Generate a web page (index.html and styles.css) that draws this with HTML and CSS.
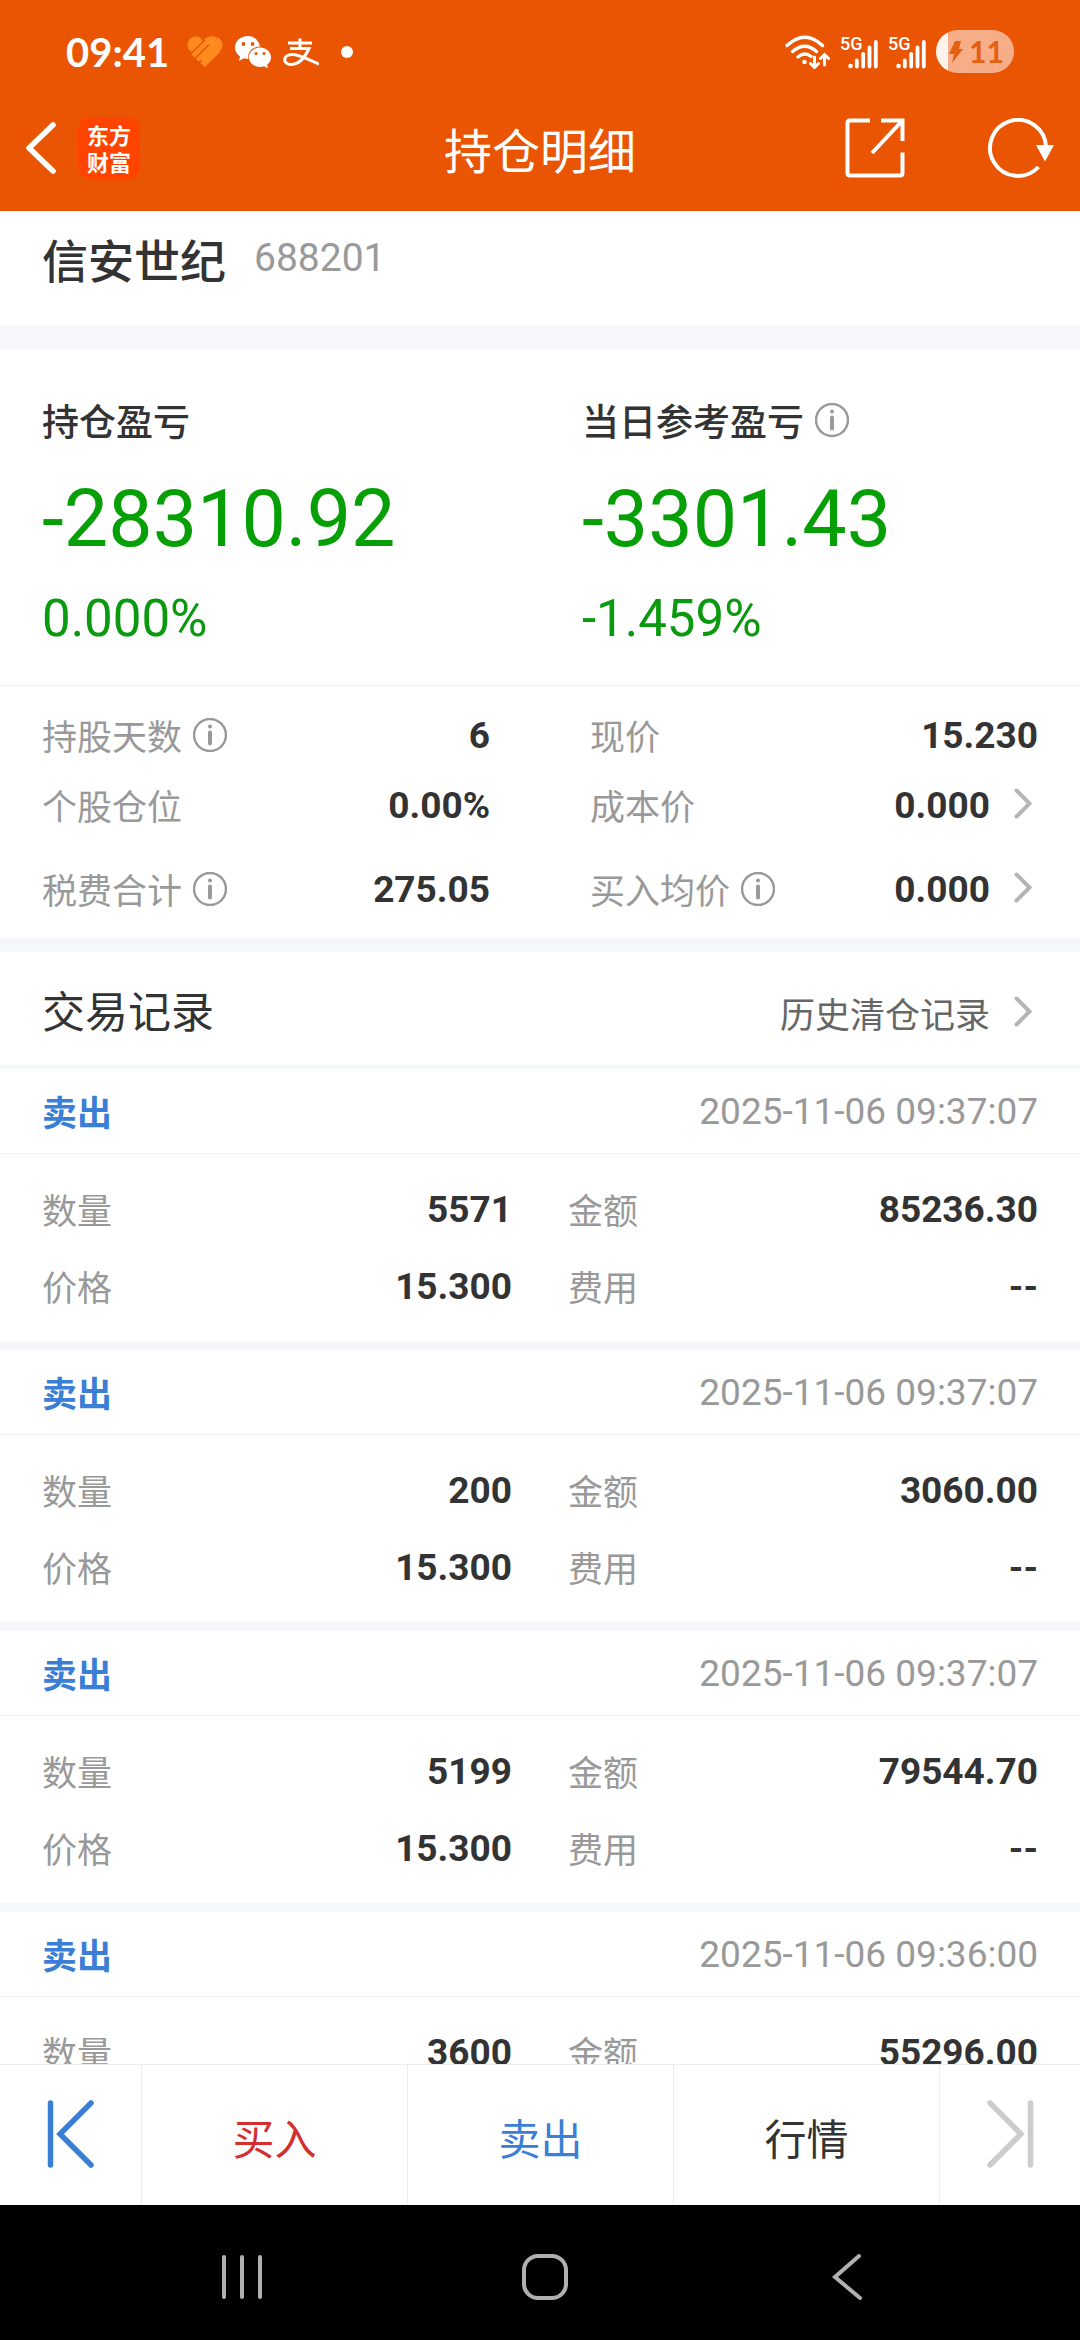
FILE: index.html
```html
<!DOCTYPE html>
<html lang="zh-CN">
<head>
    <meta charset="UTF-8">
    <meta name="viewport" content="width=device-width, initial-scale=1.0">
    <title>持仓明细</title>
    <link rel="stylesheet" href="styles.css">
</head>
<body>
    <!-- shared icons -->
    <svg class="icon-defs" aria-hidden="true">
        <symbol id="info" viewBox="0 0 34 34">
            <circle cx="17" cy="17" r="16" fill="none" stroke="currentColor" stroke-width="2.500"/>
            <circle cx="17" cy="8.500" r="2" fill="currentColor"/>
            <path d="M17 14.500v11" stroke="currentColor" stroke-width="4" stroke-linecap="round"/>
        </symbol>
        <symbol id="arrow" viewBox="0 0 24 34">
            <path d="M2.500 2.500L15.500 15.500L2.500 28.500" fill="none" stroke="currentColor" stroke-width="4" stroke-linecap="round"/>
        </symbol>
        <symbol id="signal" viewBox="0 0 30 30">
            <circle cx="2.500" cy="27" r="2.300" fill="currentColor"/>
            <path d="M8.800 21.500v6M15.200 15v12.500M21.500 8.500v19M27.800 3v24.500" stroke="currentColor" stroke-width="3.800" stroke-linecap="round"/>
        </symbol>
    </svg>

    <header class="top">
        <div class="status-bar">
            <span class="clock">09:41</span>
            <svg class="app-icon" viewBox="0 0 36 32">
                <g fill="none" stroke="#ff8a1e">
                    <path stroke-width="7" d="M3 14.500L14 3.500"/>
                    <path stroke-width="6" d="M5.500 19.500L18.500 6.500C22 3 26 3 29 4M9.500 23.500L24 9c2.500-2 4.500 0 2.500 2.500L14 24"/>
                    <path stroke-width="6.500" d="M15.500 29L29.500 15C33 11 33.500 6.500 29 4"/>
                </g>
                <circle cx="8.500" cy="8.500" r="8" fill="#ff8a1e"/>
                <path stroke="#e95503" stroke-width="1.500" d="M3 18.500L18 4M8 22.500L22 8.500"/>
            </svg>
            <svg class="app-icon" viewBox="0 0 36 32">
                <path fill="#fff" d="M13 0C5.500 0 0 5 0 11.500c0 4 2 7 5 9L4 25l5-2.800c1.500.5 3 .6 4.500.6C12 16 18 10.500 25 10.500 24 4.500 19 0 13 0z"/>
                <path fill="#fff" d="M25 11.500c-6 0-11 4.300-11 9.700s5 9.700 11 9.700c1.500 0 2.800-.2 4-.7l4 2-1-3.500c2.500-1.800 4-4.500 4-7.500 0-5.400-5-9.700-11-9.700z"/>
                <g fill="#e95503"><circle cx="8.500" cy="8" r="1.900"/><circle cx="17.500" cy="8" r="1.900"/><circle cx="21" cy="17.500" r="1.500"/><circle cx="29" cy="17.500" r="1.500"/></g>
            </svg>
            <svg class="app-icon" viewBox="0 0 36 32">
                <path fill="none" stroke="#fff" stroke-width="3" d="M5 7h24M17 2.500v10.500M7 12.500h19C23 19 17 28.500 8 28.500c-9 0-8-10 1-10 8 0 16 5 27 9.500"/>
            </svg>
            <span class="more-dot"></span>
            <div class="status-right">
                <svg class="wifi" viewBox="0 0 46 34">
                    <g fill="none" stroke="#fff" stroke-width="3.400" stroke-linecap="round">
                        <path d="M2 10.500Q20 -6 37.500 10.500M7.500 16.500Q20 6 31.500 16.500M13 22Q20 16.500 26 21.500"/>
                        <path stroke-width="3" d="M29.500 22v10M25.500 28.500l4 4 4-4M39.500 30V20M35.500 23.500l4-4 4 4"/>
                    </g>
                    <circle cx="19.500" cy="27" r="2.300" fill="#fff"/>
                </svg>
                <span class="net"><b>5G</b><svg><use href="#signal"/></svg></span>
                <span class="net"><b>5G</b><svg><use href="#signal"/></svg></span>
                <span class="battery">
                    <svg viewBox="0 0 14 22"><path d="M6 0h6L10 8h4L3 22l2-9H0z"/></svg>
                    11
                </span>
            </div>
        </div>
        <div class="title-bar">
            <div class="title-left">
                <button class="icon-btn" aria-label="返回">
                    <svg class="back" viewBox="0 0 32 52"><path d="M28 3L4 26l24 23" fill="none" stroke="#fff" stroke-width="5.500" stroke-linecap="round" stroke-linejoin="round"/></svg>
                </button>
                <span class="brand">东方<br>财富</span>
            </div>
            <h1>持仓明细</h1>
            <div class="title-right">
                <button class="icon-btn" aria-label="分享">
                    <svg class="share" viewBox="0 0 60 60"><path d="M25 2.500H5Q2.500 2.500 2.500 5V55Q2.500 57.500 5 57.500H55Q57.500 57.500 57.500 55V34.500M36 2.500H57.500V23M57 3L27 35" fill="none" stroke="#fff" stroke-width="4"/></svg>
                </button>
                <button class="icon-btn" aria-label="刷新">
                    <svg class="refresh" viewBox="0 0 68 60"><path d="M51.500 49A28 28 0 1 1 59 29" fill="none" stroke="#fff" stroke-width="4"/><path d="M49 27H67L58 43.500z" fill="#fff"/></svg>
                </button>
            </div>
        </div>
    </header>

    <main>
        <section class="stock">
            <h2>信安世纪</h2>
            <span class="code">688201</span>
        </section>

        <section class="profit">
            <div>
                <h3>持仓盈亏</h3>
                <p class="amount">-28310.92</p>
                <p class="percent">0.000%</p>
            </div>
            <div>
                <h3>当日参考盈亏 <svg class="info"><use href="#info"/></svg></h3>
                <p class="amount">-3301.43</p>
                <p class="percent">-1.459%</p>
            </div>
        </section>

        <section class="stats">
            <div class="field"><span class="label">持股天数 <svg class="info"><use href="#info"/></svg></span><span class="value">6</span></div>
            <div class="field"><span class="label">现价</span><span class="value">15.230</span></div>
            <div class="field"><span class="label">个股仓位</span><span class="value">0.00%</span></div>
            <a class="field" href="#"><span class="label">成本价</span><span class="value">0.000</span><svg class="arrow"><use href="#arrow"/></svg></a>
            <div class="field last"><span class="label">税费合计 <svg class="info"><use href="#info"/></svg></span><span class="value">275.05</span></div>
            <a class="field last" href="#"><span class="label">买入均价 <svg class="info"><use href="#info"/></svg></span><span class="value">0.000</span><svg class="arrow"><use href="#arrow"/></svg></a>
        </section>

        <section class="records">
            <div class="records-title">
                <h2>交易记录</h2>
                <a href="#">历史清仓记录<svg class="arrow"><use href="#arrow"/></svg></a>
            </div>

            <article class="record">
                <div class="record-head"><b>卖出</b><time>2025-11-06 09:37:07</time></div>
                <div class="record-body">
                    <div class="field"><span class="label">数量</span><span class="value">5571</span></div>
                    <div class="field"><span class="label">金额</span><span class="value">85236.30</span></div>
                    <div class="field"><span class="label">价格</span><span class="value">15.300</span></div>
                    <div class="field"><span class="label">费用</span><span class="value">--</span></div>
                </div>
            </article>

            <article class="record">
                <div class="record-head"><b>卖出</b><time>2025-11-06 09:37:07</time></div>
                <div class="record-body">
                    <div class="field"><span class="label">数量</span><span class="value">200</span></div>
                    <div class="field"><span class="label">金额</span><span class="value">3060.00</span></div>
                    <div class="field"><span class="label">价格</span><span class="value">15.300</span></div>
                    <div class="field"><span class="label">费用</span><span class="value">--</span></div>
                </div>
            </article>

            <article class="record">
                <div class="record-head"><b>卖出</b><time>2025-11-06 09:37:07</time></div>
                <div class="record-body">
                    <div class="field"><span class="label">数量</span><span class="value">5199</span></div>
                    <div class="field"><span class="label">金额</span><span class="value">79544.70</span></div>
                    <div class="field"><span class="label">价格</span><span class="value">15.300</span></div>
                    <div class="field"><span class="label">费用</span><span class="value">--</span></div>
                </div>
            </article>

            <article class="record">
                <div class="record-head"><b>卖出</b><time>2025-11-06 09:36:00</time></div>
                <div class="record-body">
                    <div class="field"><span class="label">数量</span><span class="value">3600</span></div>
                    <div class="field"><span class="label">金额</span><span class="value">55296.00</span></div>
                </div>
            </article>
        </section>
    </main>

    <footer class="actions">
        <button class="prev" aria-label="上一只">
            <svg viewBox="0 0 48 68"><path d="M3.500 3v62M44 3L13 34l31 31" fill="none" stroke="currentColor" stroke-width="5.500" stroke-linecap="round"/></svg>
        </button>
        <button class="buy">买入</button>
        <button class="sell">卖出</button>
        <button class="quote">行情</button>
        <button class="next" aria-label="下一只">
            <svg viewBox="0 0 48 68"><path d="M44.500 3v62M4 3l31 31L4 65" fill="none" stroke="currentColor" stroke-width="5.500" stroke-linecap="round"/></svg>
        </button>
    </footer>

    <nav class="system-nav">
        <button aria-label="最近任务"><svg viewBox="0 0 48 48"><path d="M6 4v40M24 4v40M42 4v40"/></svg></button>
        <button aria-label="主屏幕"><svg viewBox="0 0 48 48"><rect x="3" y="3" width="42" height="42" rx="14"/></svg></button>
        <button aria-label="返回上级"><svg viewBox="0 0 48 48"><path d="M36 3L12 24l25 21"/></svg></button>
    </nav>
</body>
</html>
```

FILE: styles.css
```css
* {
    box-sizing: border-box;
}
body {
    margin: 0;
    height: 100vh;
    display: flex;
    flex-direction: column;
    background: #fff;
    color: #333;
    font-family: Roboto, 'Noto Sans CJK SC', sans-serif;
    font-size: 37px;
}
h1, h2, h3, p {
    margin: 0;
}
a {
    color: inherit;
    text-decoration: none;
}
button {
    border: none;
    padding: 0;
    background: none;
    color: inherit;
    font: inherit;
    cursor: pointer;
}
svg {
    display: block;
    flex: none;
}
.icon-defs {
    display: none;
}

/* header */
.top {
    flex: none;
    background: #e95503;
    color: #fff;
}
.status-bar {
    display: flex;
    align-items: center;
    gap: 12px;
    height: 85px;
    padding: 18px 66px 0;
}
.clock {
    font: bold 40px/48px Lato, sans-serif;
    margin-right: 6px;
}
.app-icon {
    width: 36px;
    height: 32px;
}
.more-dot {
    width: 12px;
    height: 12px;
    margin-left: 10px;
    border-radius: 50%;
    background: #fff;
}
.status-right {
    display: flex;
    align-items: center;
    gap: 9px;
    margin-left: auto;
}
.wifi {
    width: 46px;
    height: 34px;
}
.net {
    display: flex;
    align-items: flex-end;
    width: 39px;
    height: 34px;
}
.net b {
    width: 8px;
    align-self: flex-start;
    font-size: 18px;
    line-height: 18px;
    font-weight: 500;
}
.net svg {
    width: 30px;
    height: 30px;
}
.battery {
    display: flex;
    align-items: center;
    gap: 6px;
    width: 78px;
    height: 43px;
    padding-left: 13px;
    border-radius: 22px;
    background: linear-gradient(to right, #fff3ec 12px, #f6ad88 12px);
    color: #e2600f;
    font: bold 30px/43px Lato, sans-serif;
}
.battery svg {
    width: 14px;
    height: 22px;
    fill: #e2600f;
}
.title-bar {
    display: flex;
    align-items: center;
    height: 126px;
    padding: 0 25px;
}
.title-left, .title-right {
    flex: 1;
    display: flex;
    align-items: center;
}
.title-left {
    gap: 21px;
}
.title-right {
    justify-content: flex-end;
    gap: 82px;
}
.title-bar h1 {
    font-family: 'Noto Sans CJK SC', sans-serif;
    font-size: 48px;
    font-weight: 400;
    line-height: 60px;
}
.back {
    width: 32px;
    height: 52px;
}
.brand {
    padding: 4px 9px;
    border-radius: 12px;
    background: #ff4400;
    font: bold 22px/27px 'Noto Sans CJK SC', sans-serif;
}
.share {
    width: 60px;
    height: 60px;
}
.refresh {
    width: 68px;
    height: 60px;
}

/* content */
main {
    flex: 1;
    min-height: 0;
    overflow: hidden;
}
.stock {
    display: flex;
    align-items: center;
    gap: 28px;
    padding: 20px 42px 41px;
    border-bottom: 23px solid #f6f7fa;
}
.stock h2 {
    font: 500 46px/54px 'Noto Sans CJK SC', sans-serif;
}
.code {
    color: #999;
    font-size: 39px;
}
.profit {
    display: grid;
    grid-template-columns: 1fr 1fr;
    padding: 45px 0 36px;
    border-bottom: 1px solid #f2f3f5;
}
.profit > div {
    padding-left: 42px;
}
.profit h3 {
    display: flex;
    align-items: center;
    gap: 11px;
    font: 500 37px/52px 'Noto Sans CJK SC', sans-serif;
}
.info {
    width: 34px;
    height: 34px;
    color: #999;
}
.amount {
    margin-top: 27px;
    color: #069f06;
    font-size: 79px;
    line-height: 92px;
}
.percent {
    margin-top: 24px;
    color: #0a990f;
    font-size: 51px;
    line-height: 60px;
}
.stats {
    display: grid;
    grid-template-columns: 1fr 1fr;
    gap: 20px 100px;
    padding: 24px 42px;
    border-bottom: 14px solid #f6f7fa;
}
.field {
    display: flex;
    align-items: center;
    height: 50px;
}
.field.last {
    margin-top: 14px;
}
.label {
    display: flex;
    align-items: center;
    gap: 11px;
    color: #999;
    font: 35px/50px 'Noto Sans CJK SC', sans-serif;
}
.value {
    margin-left: auto;
    font-weight: bold;
}
.arrow {
    width: 24px;
    height: 34px;
    margin-left: 24px;
    color: #b5b5b5;
}

/* records */
.records-title {
    display: flex;
    align-items: baseline;
    justify-content: space-between;
    padding: 27px 42px 26px;
    border-bottom: 4px solid #f5f8f9;
}
.records-title h2 {
    font: 43px/60px 'Noto Sans CJK SC', sans-serif;
}
.records-title a {
    display: flex;
    align-items: center;
    color: #666;
    font: 35px/50px 'Noto Sans CJK SC', sans-serif;
}
.record {
    border-bottom: 9px solid #f6f7fa;
}
.record-head {
    display: flex;
    align-items: center;
    justify-content: space-between;
    height: 85px;
    padding: 0 42px;
    border-bottom: 1px solid #f2f3f5;
}
.record-head b {
    color: #3a7fd5;
    font: bold 35px/50px 'Noto Sans CJK SC', sans-serif;
}
.record-head time {
    color: #999;
}
.record-body {
    display: grid;
    grid-template-columns: 1fr 1fr;
    gap: 27px 56px;
    padding: 30px 42px;
}

/* bottom bars */
.actions {
    flex: none;
    display: flex;
    height: 141px;
    border-top: 1px solid #ececec;
    font: 42px/60px 'Noto Sans CJK SC', sans-serif;
}
.actions button {
    display: flex;
    flex: 1;
    align-items: center;
    justify-content: center;
    padding-top: 4px;
    border-left: 1px solid #ececec;
}
.actions .prev, .actions .next {
    flex: 0 0 141px;
    padding: 0 0 3px;
}
.actions .prev {
    border-left: none;
    color: #3a7fd5;
}
.actions .next {
    color: #ccc;
}
.actions svg {
    width: 48px;
    height: 68px;
}
.buy {
    color: #d32f2f;
}
.sell {
    color: #3a7fd5;
}
.system-nav {
    flex: none;
    display: flex;
    justify-content: space-between;
    height: 135px;
    padding: 9px 209px 0 218px;
    background: #000;
}
.system-nav svg {
    width: 48px;
    height: 48px;
    fill: none;
    stroke: #b0b0b0;
    stroke-width: 4;
    stroke-linecap: round;
}
```
